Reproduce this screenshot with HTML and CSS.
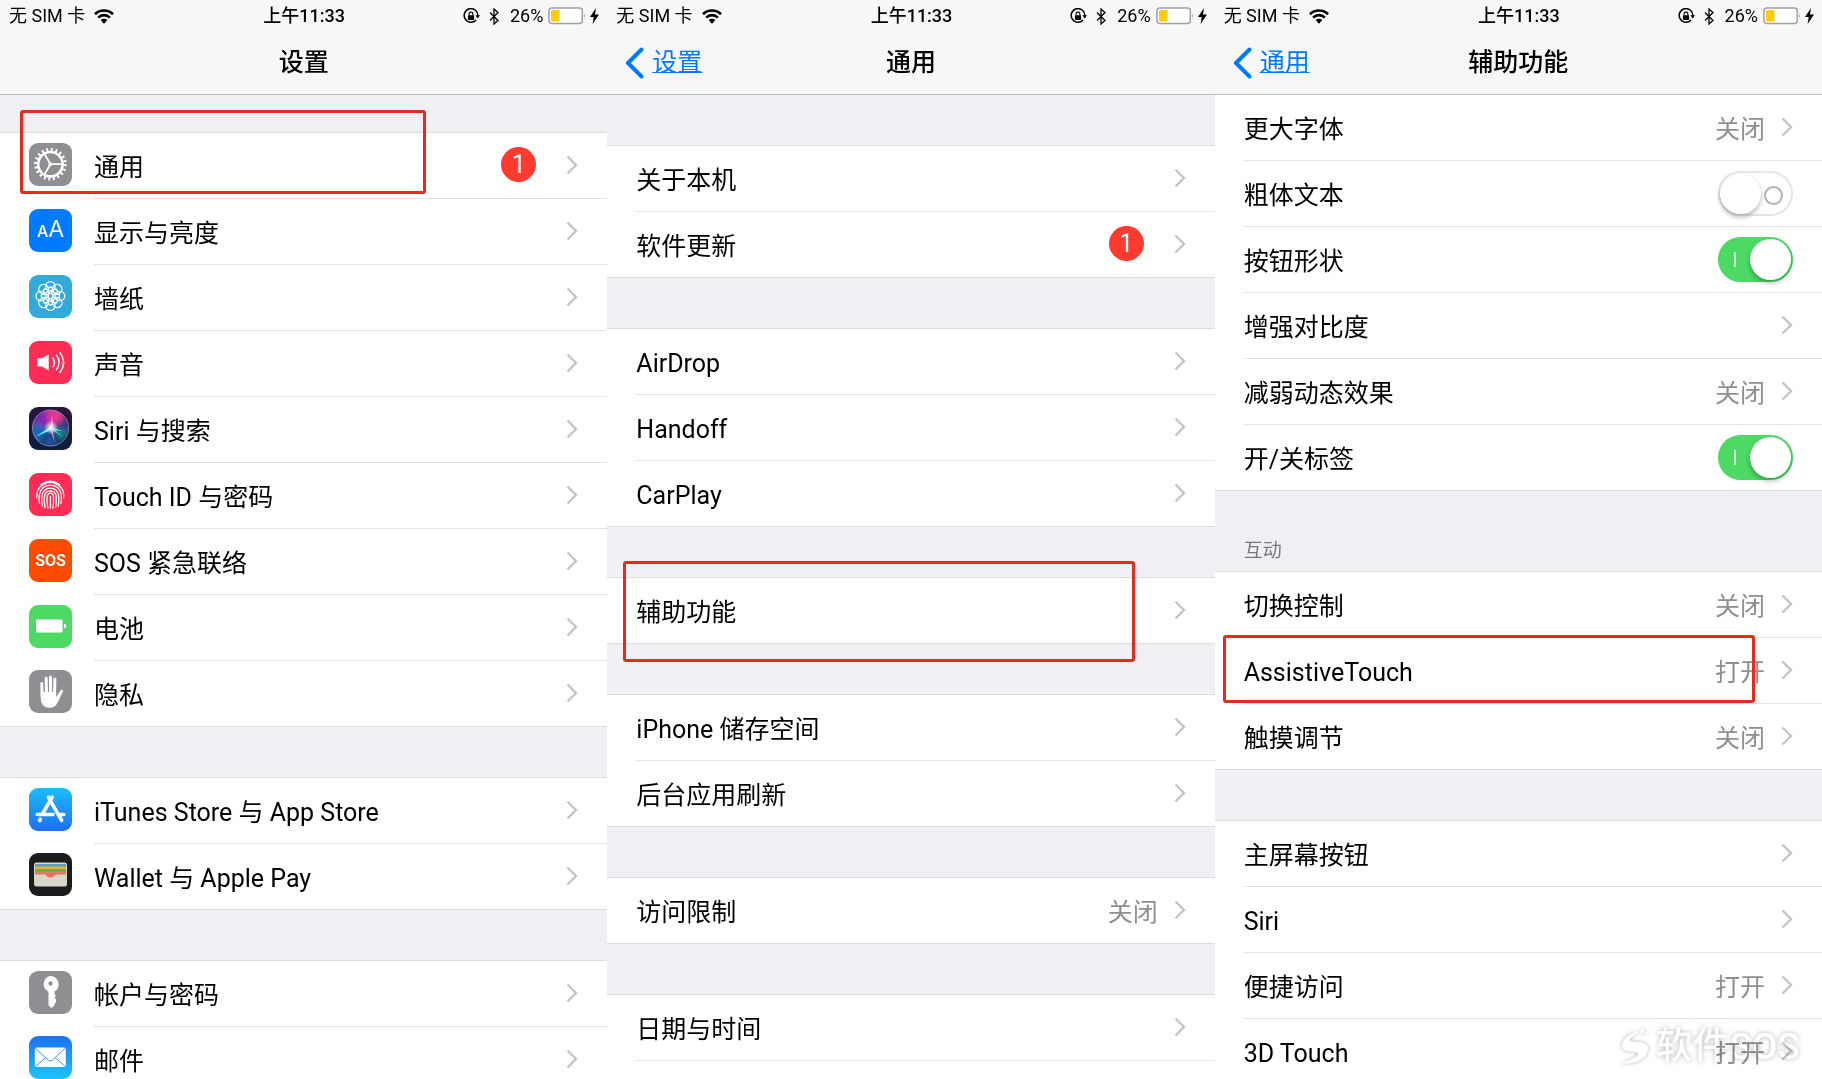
FILE: index.html
```html
<!DOCTYPE html>
<html lang="zh-CN">
<head>
<meta charset="utf-8">
<title>设置</title>
<meta name="viewport" content="width=device-width, initial-scale=1">
<link rel="stylesheet" href="styles.css">
</head>
<body>
<svg class="sprite" aria-hidden="true">
  <defs>
    <linearGradient id="g-store" x1="0" y1="0" x2="0" y2="1"><stop offset="0" stop-color="#1cbdfb"/><stop offset="1" stop-color="#1d6ff2"/></linearGradient>
    <linearGradient id="g-mail" x1="0" y1="0" x2="0" y2="1"><stop offset="0" stop-color="#1e71f0"/><stop offset="1" stop-color="#1bc5fc"/></linearGradient>
    <linearGradient id="g-siri" x1="0" y1="0" x2="0" y2="1"><stop offset="0" stop-color="#2b1440"/><stop offset="1" stop-color="#0b1e3c"/></linearGradient>
    <radialGradient id="g-glow"><stop offset="0" stop-color="#fff"/><stop offset="1" stop-color="#fff" stop-opacity="0"/></radialGradient>
    <filter id="soft" x="-30%" y="-30%" width="160%" height="160%"><feGaussianBlur stdDeviation="2.4"/></filter>
    <clipPath id="siri-orb"><circle cx="21.5" cy="21" r="18"/></clipPath>
  </defs>
  <symbol id="chevron" viewBox="0 0 12 20"><path d="M1.5 1.5 10 10 1.5 18.5" fill="none" stroke="#c4c4c9" stroke-width="2.4"/></symbol>
  <symbol id="back" viewBox="0 0 19 32"><path d="M16.5 2.5 3 16l13.5 13.5" fill="none" stroke="#007aff" stroke-width="4" stroke-linecap="round" stroke-linejoin="round"/></symbol>
  <symbol id="wifi" viewBox="0 0 20 15"><g fill="none" stroke="#000" stroke-width="2.7"><path d="M1 5.2a12.8 12.8 0 0 1 18 0"/><path d="M4.2 8.6a8.2 8.2 0 0 1 11.6 0"/></g><path d="M6.6 11.1a4.9 4.9 0 0 1 6.8 0L10 14.8z"/></symbol>
  <symbol id="lock" viewBox="0 0 17 17"><path d="M13.1 11.9A6.8 6.8 0 1 1 14.8 8" fill="none" stroke="#000" stroke-width="1.5"/><path d="M12.4 7.2h4.6l-2.3 3.3z"/><rect x="4.9" y="7.3" width="6.2" height="4.6" rx=".6"/><path d="M6.1 7.6V6a1.9 1.9 0 0 1 3.8 0v1.6" fill="none" stroke="#000" stroke-width="1.1"/></symbol>
  <symbol id="bluetooth" viewBox="0 0 10 17"><path d="m1 4.5 8 8-4 3.5V1l4 3.5-8 8" fill="none" stroke="#000" stroke-width="1.3"/></symbol>
  <symbol id="battery" viewBox="0 0 38 18"><rect x=".9" y=".9" width="33.4" height="15.6" rx="3" fill="#fff" stroke="#a0a0a3" stroke-width="1.5"/><rect x="3" y="3" width="8.5" height="11.4" rx="1" fill="#fc0"/><path d="M36 6q1.6 2.7 0 5.4z" fill="#a0a0a3"/></symbol>
  <symbol id="bolt" viewBox="0 0 9 16"><path d="M6 0 0 9h3.8L2.6 16 9 6.6H5z"/></symbol>

  <symbol id="i-general" viewBox="0 0 43 43"><rect width="43" height="43" rx="9" fill="#8e8e93"/><g fill="none" stroke="#fff"><circle cx="21.4" cy="21.2" r="12.2" stroke-width="2.6"/><circle cx="21.4" cy="21.2" r="14.6" stroke-width="3.4" stroke-dasharray="1.9 2.687"/><path d="M33 21.2H21.4l-6-10.4M21.4 21.2l-6 10.4" stroke-width="1.8"/></g><circle cx="21.4" cy="21.2" r="2" fill="#fff"/></symbol>
  <symbol id="i-wallpaper" viewBox="0 0 43 43"><rect width="43" height="43" rx="9" fill="#34aadc"/><g fill="none" stroke="#fff" stroke-width="1.3">
    <g id="petals"><circle cx="21.4" cy="11.300" r="4.700"/><circle cx="21.4" cy="30.700" r="4.700"/><circle cx="11.700" cy="21" r="4.700"/><circle cx="31.100" cy="21" r="4.700"/><ellipse cx="21.4" cy="15.200" rx="2" ry="3.400"/><ellipse cx="21.4" cy="26.800" rx="2" ry="3.400"/><ellipse cx="15.600" cy="21" rx="3.400" ry="2"/><ellipse cx="27.200" cy="21" rx="3.400" ry="2"/></g>
    <use href="#petals" transform="rotate(45 21.4 21)"/><circle cx="21.400" cy="21" r="2.600"/></g></symbol>
  <symbol id="i-sound" viewBox="0 0 43 43"><rect width="43" height="43" rx="9" fill="#ff2d55"/><path d="M8.500 17.200h4.300l6.900-3.700v16l-6.900-4H8.500z" fill="#fff"/><g fill="none" stroke="#fff" stroke-width="1.500" stroke-linecap="round"><path d="M24 17.200q3 4.300 0 8.600M27.500 14.300q5.200 7.200 0 14.400M31 11.600q7.200 9.900 0 19.800"/></g></symbol>
  <symbol id="i-siri" viewBox="0 0 43 43"><rect width="43" height="43" rx="9" fill="url(#g-siri)"/><g clip-path="url(#siri-orb)"><g filter="url(#soft)"><path d="M21 21 2 18 8 4l14-3z" fill="#7a2bb5"/><path d="M21 21 16 0h18l2 12z" fill="#e4368f"/><path d="m21 21 15-10 6 12-10 12z" fill="#3b3a8a"/><path d="M21 21 0 16v18l8 6z" fill="#1668b8"/><path d="m21 21-10 20h20z" fill="#1c4f97"/><path d="m21 21 18 3-6 12z" fill="#11817f"/></g><path d="M21 20 6 30l16-7zM21 20l13 4-12-1z" fill="#6ff0ea"/><path d="m20 20 6 16-3-16z" fill="#e873dd"/><path d="m24 21 10 9-13-8z" fill="#3bd4c5"/><path d="M21 21 23 8l1 13z" fill="#fff" opacity=".5"/><circle cx="22" cy="20.500" r="7" fill="url(#g-glow)"/></g><circle cx="21.500" cy="21" r="18" fill="none" stroke="#a9a0c8" stroke-width=".9" opacity=".8"/></symbol>
  <symbol id="i-touch" viewBox="0 0 43 43"><rect width="43" height="43" rx="9" fill="#ff2d55"/><g fill="none" stroke="#fff" stroke-width="1.300" stroke-linecap="round"><path d="M12 11.600Q21.300 4.500 30.700 11.600M7.800 24.500Q7.500 17 11 14q10-9.500 20.500 0Q35.500 18 34.600 25"/><path d="M10.500 30.500q-.8-4-.3-8.500 2-9.600 11.200-9.800Q30.800 12.500 32.300 22q.4 4.500-.2 8.500"/><path d="M13.300 33q-1-5-.5-10 1.500-7.800 8.600-7.900 7.200.1 8.300 7.900.5 5-.4 10"/><path d="M16 34.500q-1.200-6-.6-11.500 1-5 6-5.200 5 .2 5.800 5.200.5 6-.6 11.500"/><path d="M18.900 35q-1.300-6.500-.8-12 .8-2.700 3.300-2.800 2.500.1 3.100 2.800.4 6-.6 12M21.400 23.500V35"/></g></symbol>
  <symbol id="i-battery" viewBox="0 0 43 43"><rect width="43" height="43" rx="9" fill="#4cd964"/><rect x="7" y="14.500" width="26.500" height="13" rx="1" fill="#fff"/><path d="M35 18.500q2.200.3 2.200 2.600T35 23.700z" fill="#fff"/></symbol>
  <symbol id="i-privacy" viewBox="0 0 43 43"><rect width="43" height="43" rx="9" fill="#8e8e93"/><g stroke="#fff" stroke-width="3" stroke-linecap="round"><path d="M12.800 13.500 13.200 26M17.200 8.300 17.500 24M21.500 7v17M25.900 9 25.500 25"/></g><path d="M11.700 22h15.500v5.200l3.200-5.200q1.600-2.600 3.400-2.200.8.500-.3 2.700L28.700 32.200q-2.400 5.600-8 5.600-9 0-9-10z" fill="#fff"/></symbol>
  <symbol id="i-store" viewBox="0 0 43 43"><rect width="43" height="43" rx="9" fill="url(#g-store)"/><g fill="none" stroke="#fff" stroke-width="3.600" stroke-linecap="round"><path d="M8.300 26.500H24M31 26.500h3.800M23.300 9.200 13.300 26M11.300 31.300l-.7 1.200M19.300 9.200l13.300 23.200"/></g></symbol>
  <symbol id="i-wallet" viewBox="0 0 43 43"><rect width="43" height="43" rx="9" fill="#1c1c1e"/><rect x="5" y="9.500" width="33" height="24" rx="2.500" fill="#d9d5c9"/><path d="M6 11h31v4H6z" fill="#5b9fc0"/><path d="M6 13.500h31V17H6z" fill="#e2b13a"/><path d="M6 16h31v3.500H6z" fill="#79a93e"/><path d="M6 19.200h31v3.500H6z" fill="#e9705f"/><path d="M6 21.500h9.500q1.300 0 2 1.400 1.400 2.300 4 2.300t4-2.300q.7-1.400 2-1.400H37V33H6z" fill="#d9d5c9"/><path d="M16.500 20.500h10q-1 4-5 4t-5-4z" fill="#e9705f"/></symbol>
  <symbol id="i-key" viewBox="0 0 43 43"><rect width="43" height="43" rx="9" fill="#8e8e93"/><path fill="#fff" fill-rule="evenodd" d="M21.500 5a8.300 8.300 0 0 1 4 15.400v2.800l1.500 1.500-1.500 1.700 1.500 1.600v3.200l-1.500 1.500.2 1.600-3.200 2.700-3-2.700V20.700A8.300 8.300 0 0 1 21.500 5zm0 5.300a2.200 2.200 0 1 0 .01 0z"/></symbol>
  <symbol id="i-mail" viewBox="0 0 43 43"><rect width="43" height="43" rx="9" fill="url(#g-mail)"/><rect x="5.800" y="11.500" width="31" height="19.500" rx="1.800" fill="#fff"/><path d="m6.300 12.200 13 12q2 1.700 4 0l13-12M6.300 30.500l10.200-9M36.300 30.500l-10.200-9" fill="none" stroke="#3c9bf0" stroke-width="1"/></symbol>
  <symbol id="brand" viewBox="0 0 32 38"><path d="M20 3C8 6 2 13 3 20c2 5 13 3 16 5 1 3-6 7-17 10 12 2 25-3 27-13 1-7-6-8-13-8-5 0-6-2-4-4 2-3 5-5 8-7z"/><path d="m21 2 3-2 1 4-3 2zM26 5l2-1v3z"/></symbol>
</svg>

<div class="screens">
  <section class="phone">
    <header class="bar">
      <div class="status">
        <span class="carrier">无 SIM 卡 <svg class="wifi"><use href="#wifi"/></svg></span>
        <span class="clock">上午11:33</span>
        <span class="indicators"><svg class="lock"><use href="#lock"/></svg><svg class="bluetooth"><use href="#bluetooth"/></svg><span class="percent">26%</span><svg class="battery"><use href="#battery"/></svg><svg class="bolt"><use href="#bolt"/></svg></span>
      </div>
      <div class="nav"><h1>设置</h1></div>
    </header>
    <main class="content content-root">
      <ul class="group">
        <li><a class="row" href="#general"><svg class="icon"><use href="#i-general"/></svg><span class="cell"><span class="label">通用</span><span class="badge">1</span><svg class="chevron"><use href="#chevron"/></svg></span></a><span class="marker marker-general"></span></li>
        <li><a class="row" href="#display"><span class="icon icon-display"><span class="small-a">A</span><span>A</span></span><span class="cell"><span class="label">显示与亮度</span><svg class="chevron"><use href="#chevron"/></svg></span></a></li>
        <li><a class="row" href="#wallpaper"><svg class="icon"><use href="#i-wallpaper"/></svg><span class="cell"><span class="label">墙纸</span><svg class="chevron"><use href="#chevron"/></svg></span></a></li>
        <li><a class="row" href="#sound"><svg class="icon"><use href="#i-sound"/></svg><span class="cell"><span class="label">声音</span><svg class="chevron"><use href="#chevron"/></svg></span></a></li>
        <li><a class="row" href="#siri"><svg class="icon"><use href="#i-siri"/></svg><span class="cell"><span class="label">Siri 与搜索</span><svg class="chevron"><use href="#chevron"/></svg></span></a></li>
        <li><a class="row" href="#touch-id"><svg class="icon"><use href="#i-touch"/></svg><span class="cell"><span class="label">Touch ID 与密码</span><svg class="chevron"><use href="#chevron"/></svg></span></a></li>
        <li><a class="row" href="#sos"><span class="icon icon-sos">SOS</span><span class="cell"><span class="label">SOS 紧急联络</span><svg class="chevron"><use href="#chevron"/></svg></span></a></li>
        <li><a class="row" href="#power"><svg class="icon"><use href="#i-battery"/></svg><span class="cell"><span class="label">电池</span><svg class="chevron"><use href="#chevron"/></svg></span></a></li>
        <li><a class="row" href="#privacy"><svg class="icon"><use href="#i-privacy"/></svg><span class="cell"><span class="label">隐私</span><svg class="chevron"><use href="#chevron"/></svg></span></a></li>
      </ul>
      <ul class="group">
        <li><a class="row" href="#store"><svg class="icon"><use href="#i-store"/></svg><span class="cell"><span class="label">iTunes Store 与 App Store</span><svg class="chevron"><use href="#chevron"/></svg></span></a></li>
        <li><a class="row" href="#wallet"><svg class="icon"><use href="#i-wallet"/></svg><span class="cell"><span class="label">Wallet 与 Apple Pay</span><svg class="chevron"><use href="#chevron"/></svg></span></a></li>
      </ul>
      <ul class="group">
        <li><a class="row" href="#accounts"><svg class="icon"><use href="#i-key"/></svg><span class="cell"><span class="label">帐户与密码</span><svg class="chevron"><use href="#chevron"/></svg></span></a></li>
        <li><a class="row" href="#mail"><svg class="icon"><use href="#i-mail"/></svg><span class="cell"><span class="label">邮件</span><svg class="chevron"><use href="#chevron"/></svg></span></a></li>
      </ul>
    </main>
  </section>

  <section class="phone" id="general">
    <header class="bar">
      <div class="status">
        <span class="carrier">无 SIM 卡 <svg class="wifi"><use href="#wifi"/></svg></span>
        <span class="clock">上午11:33</span>
        <span class="indicators"><svg class="lock"><use href="#lock"/></svg><svg class="bluetooth"><use href="#bluetooth"/></svg><span class="percent">26%</span><svg class="battery"><use href="#battery"/></svg><svg class="bolt"><use href="#bolt"/></svg></span>
      </div>
      <div class="nav"><a class="back" href="#"><svg><use href="#back"/></svg><span>设置</span></a><h1>通用</h1></div>
    </header>
    <main class="content content-general">
      <ul class="group">
        <li><a class="row" href="#about"><span class="cell"><span class="label">关于本机</span><svg class="chevron"><use href="#chevron"/></svg></span></a></li>
        <li><a class="row" href="#update"><span class="cell"><span class="label">软件更新</span><span class="badge">1</span><svg class="chevron"><use href="#chevron"/></svg></span></a></li>
      </ul>
      <ul class="group">
        <li><a class="row" href="#airdrop"><span class="cell"><span class="label">AirDrop</span><svg class="chevron"><use href="#chevron"/></svg></span></a></li>
        <li><a class="row" href="#handoff"><span class="cell"><span class="label">Handoff</span><svg class="chevron"><use href="#chevron"/></svg></span></a></li>
        <li><a class="row" href="#carplay"><span class="cell"><span class="label">CarPlay</span><svg class="chevron"><use href="#chevron"/></svg></span></a></li>
      </ul>
      <ul class="group">
        <li><a class="row" href="#accessibility"><span class="cell"><span class="label">辅助功能</span><svg class="chevron"><use href="#chevron"/></svg></span></a><span class="marker marker-accessibility"></span></li>
      </ul>
      <ul class="group">
        <li><a class="row" href="#storage"><span class="cell"><span class="label">iPhone 储存空间</span><svg class="chevron"><use href="#chevron"/></svg></span></a></li>
        <li><a class="row" href="#refresh"><span class="cell"><span class="label">后台应用刷新</span><svg class="chevron"><use href="#chevron"/></svg></span></a></li>
      </ul>
      <ul class="group">
        <li><a class="row" href="#restrictions"><span class="cell"><span class="label">访问限制</span><span class="value">关闭</span><svg class="chevron"><use href="#chevron"/></svg></span></a></li>
      </ul>
      <ul class="group group-open">
        <li><a class="row" href="#date"><span class="cell"><span class="label">日期与时间</span><svg class="chevron"><use href="#chevron"/></svg></span></a></li>
      </ul>
    </main>
  </section>

  <section class="phone" id="accessibility">
    <header class="bar">
      <div class="status">
        <span class="carrier">无 SIM 卡 <svg class="wifi"><use href="#wifi"/></svg></span>
        <span class="clock">上午11:33</span>
        <span class="indicators"><svg class="lock"><use href="#lock"/></svg><svg class="bluetooth"><use href="#bluetooth"/></svg><span class="percent">26%</span><svg class="battery"><use href="#battery"/></svg><svg class="bolt"><use href="#bolt"/></svg></span>
      </div>
      <div class="nav"><a class="back" href="#general"><svg><use href="#back"/></svg><span>通用</span></a><h1>辅助功能</h1></div>
    </header>
    <main class="content">
      <ul class="group group-first">
        <li><a class="row" href="#larger-text"><span class="cell"><span class="label">更大字体</span><span class="value">关闭</span><svg class="chevron"><use href="#chevron"/></svg></span></a></li>
        <li><label class="row"><span class="cell"><span class="label">粗体文本</span><input class="switch" type="checkbox"></span></label></li>
        <li><label class="row"><span class="cell"><span class="label">按钮形状</span><input class="switch" type="checkbox" checked></span></label></li>
        <li><a class="row" href="#contrast"><span class="cell"><span class="label">增强对比度</span><svg class="chevron"><use href="#chevron"/></svg></span></a></li>
        <li><a class="row" href="#motion"><span class="cell"><span class="label">减弱动态效果</span><span class="value">关闭</span><svg class="chevron"><use href="#chevron"/></svg></span></a></li>
        <li><label class="row"><span class="cell"><span class="label">开/关标签</span><input class="switch" type="checkbox" checked></span></label></li>
      </ul>
      <h2 class="section-title">互动</h2>
      <ul class="group">
        <li><a class="row" href="#switch-control"><span class="cell"><span class="label">切换控制</span><span class="value">关闭</span><svg class="chevron"><use href="#chevron"/></svg></span></a></li>
        <li><a class="row" href="#assistive-touch"><span class="cell"><span class="label">AssistiveTouch</span><span class="value">打开</span><svg class="chevron"><use href="#chevron"/></svg></span></a><span class="marker marker-assistive"></span></li>
        <li><a class="row" href="#touch"><span class="cell"><span class="label">触摸调节</span><span class="value">关闭</span><svg class="chevron"><use href="#chevron"/></svg></span></a></li>
      </ul>
      <ul class="group">
        <li><a class="row" href="#home-button"><span class="cell"><span class="label">主屏幕按钮</span><svg class="chevron"><use href="#chevron"/></svg></span></a></li>
        <li><a class="row" href="#siri-access"><span class="cell"><span class="label">Siri</span><svg class="chevron"><use href="#chevron"/></svg></span></a></li>
        <li><a class="row" href="#reachability"><span class="cell"><span class="label">便捷访问</span><span class="value">打开</span><svg class="chevron"><use href="#chevron"/></svg></span></a></li>
        <li><a class="row" href="#force-touch"><span class="cell"><span class="label">3D Touch</span><span class="value">打开</span><svg class="chevron"><use href="#chevron"/></svg></span></a></li>
      </ul>
    </main>
  </section>
  <div class="watermark"><svg><use href="#brand"/></svg><span>软件SOS</span></div>
</div>
</body>
</html>
```

FILE: styles.css
```css
:root {
  --line: #dcdce0;
  --ground: #efeff4;
  --muted: #8e8e93;
  --edge: 29px;
}

* { box-sizing: border-box; }

body {
  margin: 0;
  background: #fff;
  color: #000;
  font-family: Roboto, "Noto Sans CJK SC", sans-serif;
  font-size: 25px;
  line-height: 36px;
}

h1, h2, ul { margin: 0; padding: 0; }
ul { list-style: none; }
a { color: inherit; text-decoration: none; }
svg { display: block; flex: none; }
.sprite { position: absolute; width: 0; height: 0; }

.screens {
  position: relative;
  display: grid;
  grid-template-columns: repeat(3, 1fr);
  height: 100vh;
  overflow: hidden;
}

.phone {
  display: flex;
  flex-direction: column;
  min-width: 0;
  min-height: 0;
  background: var(--ground);
}

/* Status and navigation bar */
.bar {
  flex: none;
  background: #f7f7f8;
  border-bottom: 1px solid #bdbdc1;
}

.status {
  display: grid;
  grid-template-columns: 1fr auto 1fr;
  align-items: center;
  height: 32px;
  padding: 0 8px 0 9px;
  font-size: 18px;
  line-height: 32px;
}

.carrier, .indicators { display: flex; align-items: center; }
.carrier { gap: 9px; }
.clock { font-weight: 500; }
.indicators { justify-content: flex-end; }
.wifi { width: 20px; height: 15px; }
.lock { width: 17px; height: 17px; margin-right: 9px; }
.bluetooth { width: 10px; height: 17px; margin-right: 11px; }
.percent { margin-right: 5px; }
.battery { width: 38px; height: 18px; margin-right: 4px; }
.bolt { width: 9px; height: 16px; }

.nav {
  display: grid;
  grid-template-columns: 1fr auto 1fr;
  align-items: center;
  height: 62px;
}

.nav h1 {
  grid-column: 2;
  font-size: 25px;
  font-weight: 500;
  line-height: 36px;
}

.back {
  display: flex;
  align-items: center;
  gap: 8px;
  padding-left: 18px;
  color: #007aff;
}

.back span {
  text-decoration: underline;
  text-decoration-thickness: 1px;
  text-underline-offset: 1px;
}
.back svg { width: 19px; height: 32px; }

/* Lists */
.content {
  display: flex;
  flex: 1;
  flex-direction: column;
  min-height: 0;
}
.content-root { padding-top: 37px; }
.content-general { padding-top: 50px; }

.group {
  flex: none;
  background: #fff;
  border-top: 1px solid var(--line);
  border-bottom: 1px solid var(--line);
}
.group + .group { margin-top: 50px; }
.group-first { border-top: 0; }
.group-open { flex: 1 0 auto; border-bottom: 0; }

.group li { position: relative; }

.row {
  display: flex;
  align-items: center;
  gap: 22px;
  padding-left: var(--edge);
}

.icon {
  flex: none;
  width: 43px;
  height: 43px;
  margin-bottom: 4px;
}

.icon-display, .icon-sos {
  display: flex;
  align-items: baseline;
  justify-content: center;
  border-radius: 9px;
  color: #fff;
  line-height: 40px;
}
.icon-display {
  background: #007aff;
  font-family: Inter, sans-serif;
  font-size: 23px;
}
.small-a { font-size: 16px; font-weight: 500; }
.icon-sos {
  background: #ff4a00;
  font-size: 16px;
  font-weight: 700;
  line-height: 43px;
}

.cell {
  display: flex;
  flex: 1;
  align-items: center;
  height: 66px;
  padding-right: var(--edge);
  border-bottom: 1px solid #e3e3e6;
}
li:last-child .cell { height: 65px; border-bottom: 0; }
.group-open li:last-child .cell { height: 66px; border-bottom: 1px solid #e3e3e6; }

.label { flex: 1; padding-top: 4px; }
.value { padding-top: 4px; margin-right: 16px; color: var(--muted); }
.chevron { width: 12px; height: 20px; margin-bottom: 2px; }

.badge {
  width: 35px;
  height: 35px;
  margin-right: 30px;
  margin-bottom: 2px;
  border-radius: 50%;
  background: #ff3b30;
  color: #fff;
  line-height: 36px;
  text-align: center;
}

.section-title {
  flex: none;
  height: 80px;
  padding: 46px var(--edge) 0;
  color: #77777c;
  font-size: 19px;
  font-weight: 400;
  line-height: 28px;
}

/* Switches with on/off labels */
.switch {
  position: relative;
  flex: none;
  width: 75px;
  height: 45px;
  margin: 0;
  border: 2px solid #e5e5e6;
  border-radius: 23px;
  background: #fff;
  appearance: none;
}
.switch::before {
  content: "";
  position: absolute;
  top: 0;
  left: 0;
  width: 41px;
  height: 41px;
  border-radius: 50%;
  background: #fff;
  box-shadow: 0 3px 5px rgba(0, 0, 0, .28);
}
.switch::after {
  content: "";
  position: absolute;
  top: 13px;
  right: 8px;
  width: 15px;
  height: 15px;
  border: 2px solid #b4b4b6;
  border-radius: 50%;
}
.switch:checked { border-color: #4cd964; background: #4cd964; }
.switch:checked::before { left: 30px; }
.switch:checked::after {
  left: 14px;
  width: 2px;
  border: 0;
  border-radius: 0;
  background: #d8f7dd;
}

/* Highlight frames */
.marker {
  position: absolute;
  z-index: 1;
  border: 3px solid #e8291f;
  border-radius: 3px;
  pointer-events: none;
}
.marker-general { top: -23px; right: 181px; bottom: 5px; left: 20px; }
.marker-accessibility { top: -17px; right: 80px; bottom: -19px; left: 16px; }
.marker-assistive { top: -3px; right: 67px; bottom: 1px; left: 8px; }

/* Multiply keeps the row text readable under the white lettering */
.watermark {
  position: absolute;
  right: 22px;
  bottom: 10px;
  display: flex;
  align-items: center;
  gap: 5px;
  color: #fff;
  font-size: 37px;
  font-weight: 500;
  line-height: 44px;
  text-shadow: 0 0 5px rgba(0, 0, 0, .3);
  mix-blend-mode: multiply;
  pointer-events: none;
}
.watermark svg {
  width: 32px;
  height: 38px;
  fill: #fff;
  filter: drop-shadow(0 0 2px rgba(0, 0, 0, .3));
}
```
